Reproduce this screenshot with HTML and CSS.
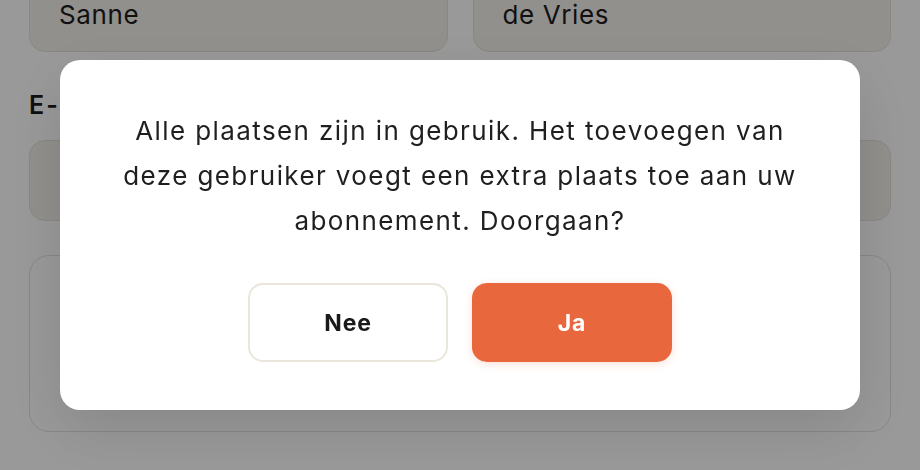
FILE: index.html
```html
<!DOCTYPE html>
<html lang="nl">
<head>
<meta charset="utf-8">
<title>Gebruiker toevoegen</title>
<link rel="stylesheet" href="styles.css">
</head>
<body>
<div class="page">
  <div class="row">
    <div class="field">Sanne</div>
    <div class="field">de Vries</div>
  </div>
  <div class="label">E-mailadres</div>
  <div class="field wide"><span class="ph">.</span></div>
  <div class="card"></div>
</div>

<div class="overlay">
  <div class="modal">
    <p class="msg">Alle plaatsen zijn in gebruik. Het toevoegen van deze gebruiker voegt een extra plaats toe aan uw abonnement. Doorgaan?</p>
    <div class="actions">
      <button class="btn btn-no">Nee</button>
      <button class="btn btn-yes">Ja</button>
    </div>
  </div>
</div>
</body>
</html>
```

FILE: styles.css
```css
* { box-sizing: border-box; }
html, body { margin: 0; padding: 0; }
body {
  background: #ffffff;
  font-family: Inter, "DejaVu Sans", sans-serif;
  color: #1c1c1c;
  width: 920px;
  height: 470px;
  overflow: hidden;
}
.page {
  padding: 0 29px;
  margin-top: -29px;
}
.row {
  display: grid;
  grid-template-columns: 1fr 1fr;
  gap: 25px;
}
.field {
  height: 81px;
  border: 1.5px solid #e6e1d8;
  background: #f2f0eb;
  border-radius: 16px;
  padding: 5px 29px 0;
  display: flex;
  align-items: center;
  font-size: 26px;
  letter-spacing: 0.6px;
  color: #1c1c1c;
}
.label {
  margin-top: 38px;
  height: 50px;
  font-size: 25px;
  font-weight: 600;
  letter-spacing: 2px;
  color: #1a1a1a;
}
.field.wide { width: 100%; }
.ph { color: #888; font-size: 20px; }
.card {
  margin-top: 34px;
  height: 177px;
  border: 1.5px solid #e6e1d8;
  border-radius: 20px;
  background: #ffffff;
}
.overlay {
  position: fixed;
  inset: 0;
  background: rgba(0, 0, 0, 0.4);
  display: flex;
  align-items: center;
  justify-content: center;
}
.modal {
  width: 800px;
  background: #ffffff;
  border-radius: 20px;
  padding: 48px 40px 48px;
  box-shadow: 0 20px 60px rgba(0, 0, 0, 0.12);
  display: flex;
  flex-direction: column;
  align-items: center;
}
.msg {
  margin: 0;
  font-size: 26px;
  line-height: 45px;
  text-align: center;
  color: #1f1f1f;
  letter-spacing: 1.4px;
}
.actions {
  margin-top: 40px;
  display: flex;
  gap: 24px;
}
.btn {
  width: 200px;
  height: 79px;
  border-radius: 15px;
  font-family: Inter, "DejaVu Sans", sans-serif;
  font-size: 23px;
  font-weight: 700;
  letter-spacing: 0.8px;
  cursor: pointer;
}
.btn-no {
  background: #ffffff;
  border: 2px solid #ebe6dc;
  color: #1a1a1a;
}
.btn-yes {
  background: #e8673d;
  border: none;
  color: #ffffff;
  box-shadow: 0 2px 8px rgba(232, 103, 61, 0.2);
}
```
